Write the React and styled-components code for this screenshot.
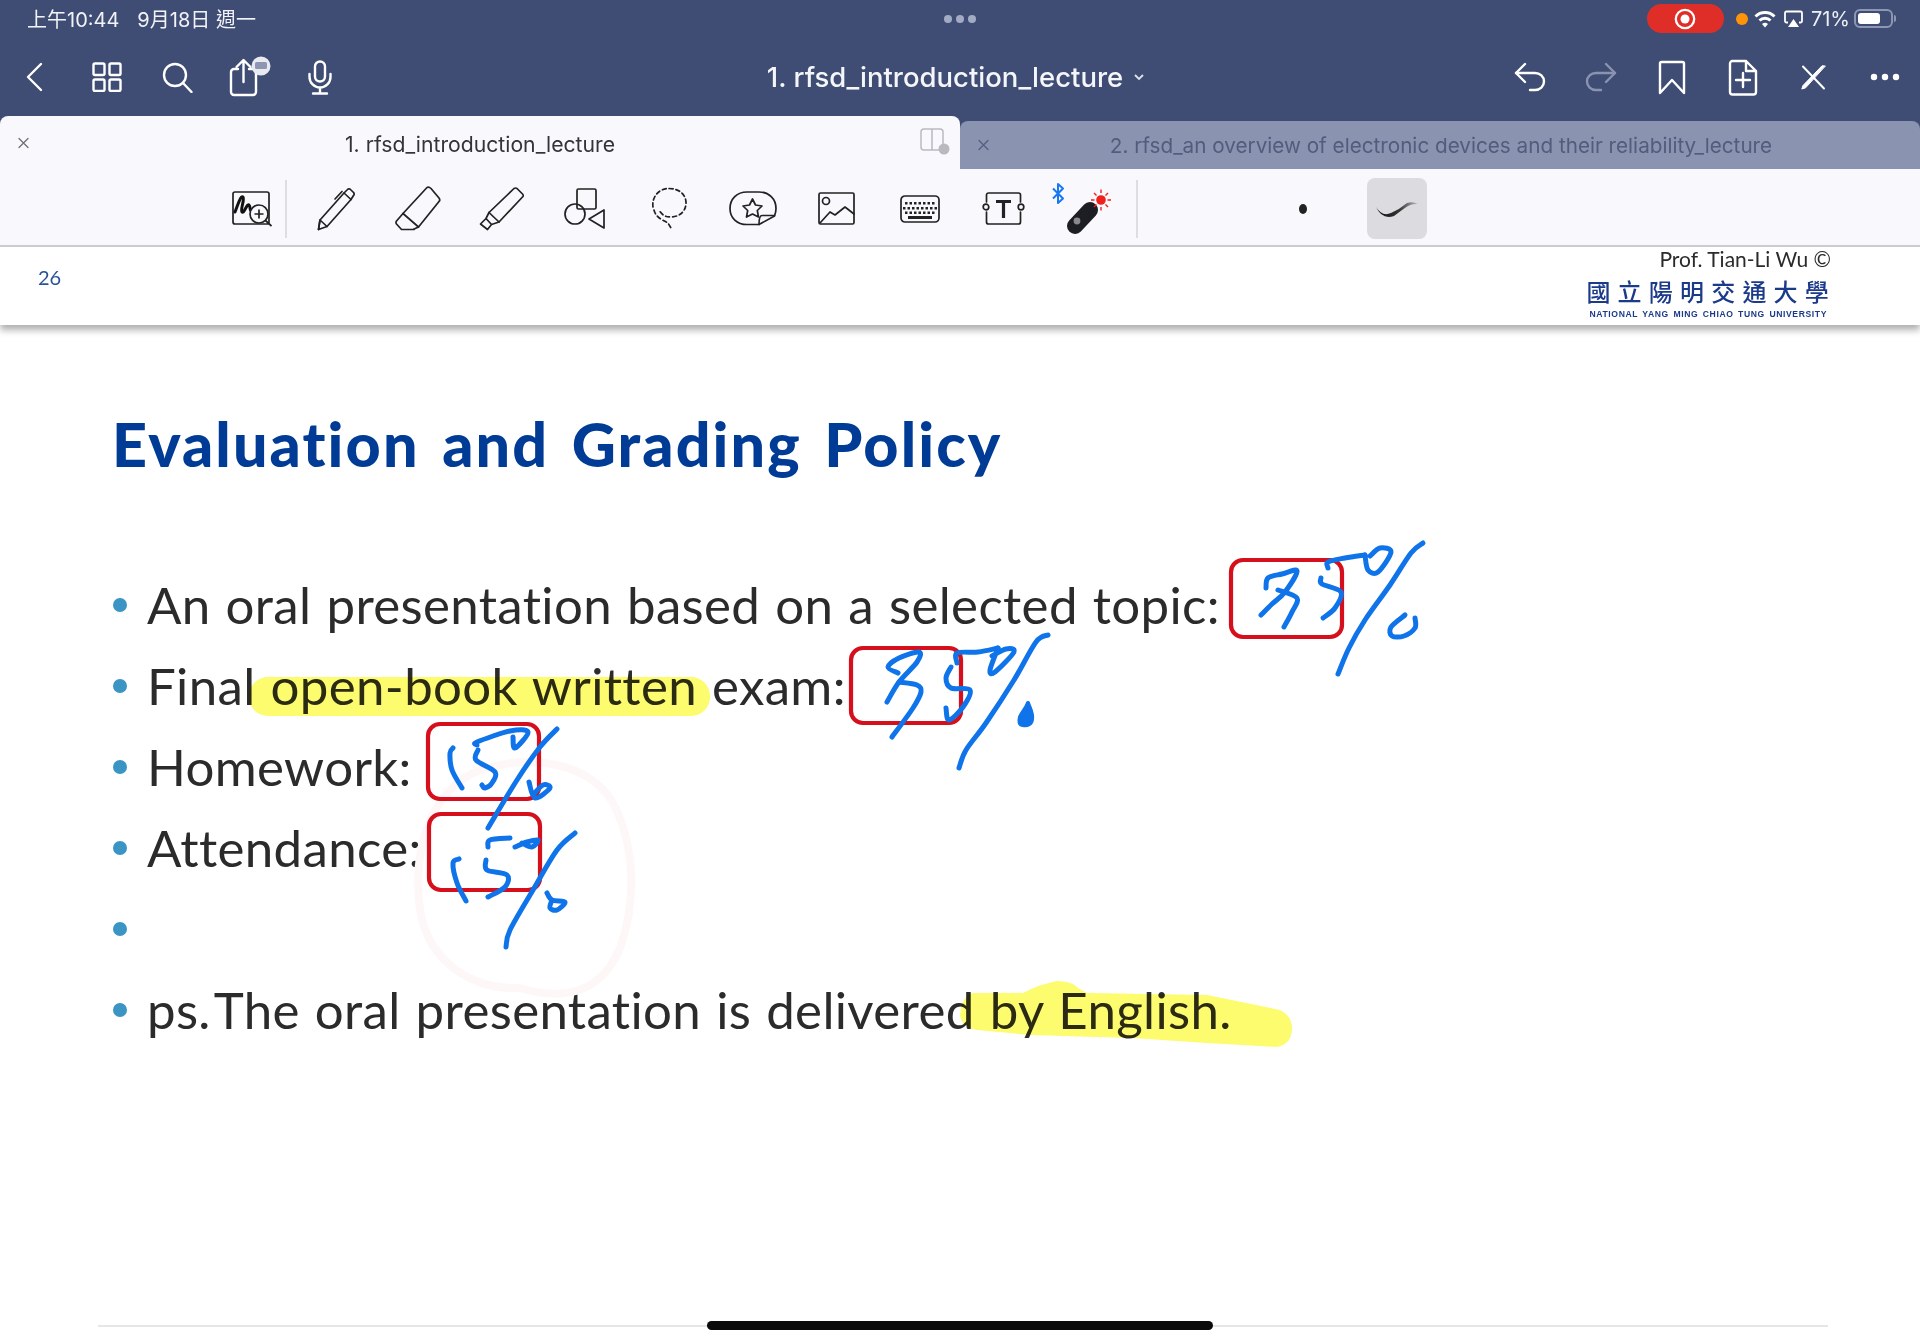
import styled, { createGlobalStyle } from "styled-components"

const GlobalStyle = createGlobalStyle`
    html, body {
        margin: 0;
        padding: 0;
        background: #fff;
    }
    * {
        box-sizing: border-box;
    }
`

const Page = styled.div`
    position: relative;
    width: 1920px;
    height: 1342px;
    overflow: hidden;
    display: flex;
    flex-direction: column;
    background: #fff;
    font-family: Inter, "Noto Sans CJK TC", sans-serif;
`

const Chrome = styled.div`
    background: #3f4d75;
    color: #fff;
`

const StatusBar = styled.div`
    height: 40px;
    padding: 0 27px 3px 27px;
    display: grid;
    grid-template-columns: 1fr auto 1fr;
    align-items: center;
`

const Clock = styled.div`
    display: flex;
    gap: 18px;
    font-size: 20px;
    font-family: Inter, "Noto Sans CJK TC", sans-serif;
    color: #f2f3f7;
`

const Dots = styled.div`
    display: flex;
    gap: 4px;
`

const Dot = styled.span`
    width: 8px;
    height: 8px;
    border-radius: 50%;
    background: ${({color}) => color || "#a3abc4"};
`

const StatusRight = styled.div`
    display: flex;
    justify-content: flex-end;
    align-items: center;
    font-size: 20px;
    color: #eef0f5;
`

const RecordPill = styled.div`
    width: 77px;
    height: 29px;
    border-radius: 15px;
    background: #df2e28;
    display: flex;
    align-items: center;
    justify-content: center;
    margin-right: 12px;
`

const OrangeDot = styled.span`
    width: 12px;
    height: 12px;
    border-radius: 50%;
    background: #ff9408;
    margin-right: 6px;
`

const Percent = styled.span`
    margin: 0 4px 0 8px;
`

const Battery = styled.div`
    width: 39px;
    height: 19px;
    border: 2px solid #8d96b3;
    border-radius: 6px;
    padding: 2px;
    position: relative;

    &::after {
        content: "";
        position: absolute;
        right: -5px;
        top: 4px;
        width: 2px;
        height: 7px;
        border-radius: 0 2px 2px 0;
        background: #8d96b3;
    }
`

const BatteryFill = styled.div`
    width: 71%;
    height: 100%;
    background: #fff;
    border-radius: 3px;
`

const NavBar = styled.div`
    height: 76px;
    padding-bottom: 2px;
    display: grid;
    grid-template-columns: 1fr auto 1fr;
    align-items: center;
`

const NavGroup = styled.div`
    display: flex;
    justify-content: ${({end}) => (end ? "flex-end" : "flex-start")};
`

const NavSlot = styled.div`
    width: 71px;
    height: 44px;
    display: flex;
    align-items: center;
    justify-content: center;
`

const DocTitle = styled.div`
    display: flex;
    align-items: center;
    gap: 10px;
    font-size: 27.5px;
    font-weight: 500;
    color: #f5f6fa;
    margin-right: 8px;
`

const TabBar = styled.div`
    height: 53px;
    display: grid;
    grid-template-columns: 960px 960px;
    background: #3f4d75;
`

const Tab = styled.div`
    position: relative;
    display: flex;
    align-items: center;
    justify-content: center;
    margin-top: ${({active}) => (active ? "0" : "5px")};
    padding-left: ${({active}) => (active ? "0" : "2px")};
    padding-top: ${({active}) => (active ? "2px" : "0")};
    background: ${({active}) => (active ? "#f9f8fc" : "#8a93b0")};
    color: ${({active}) => (active ? "#33343a" : "#525c7c")};
    border-radius: 8px 8px 0 0;
    font-size: ${({active}) => (active ? "21.2px" : "20.7px")};
`

const TabClose = styled.span`
    position: absolute;
    left: 17px;
    top: 50%;
    transform: translateY(-50%);
    display: flex;
`

const TabAction = styled.span`
    position: absolute;
    right: 10px;
    top: 12px;
    display: flex;
`

const ToolBar = styled.div`
    height: 78px;
    padding: 3px 0 0 218px;
    display: flex;
    align-items: center;
    background: #f9f8fc;
    border-bottom: 2px solid #cfced3;
`

const Tool = styled.div`
    width: ${({width}) => width || 83.6}px;
    height: 60px;
    flex: none;
    display: flex;
    align-items: center;
    justify-content: center;
`

const ToolDivider = styled.div`
    width: 2px;
    height: 58px;
    flex: none;
    background: #dedde2;
    margin: 0 ${({after}) => after || 0}px 0 ${({before}) => before || 0}px;
`

const PenDot = styled.span`
    width: 8px;
    height: 10px;
    margin: 0 60px 0 161px;
    border-radius: 50%;
    background: #222;
`

const BrushButton = styled.div`
    width: 60px;
    height: 61px;
    border-radius: 8px;
    background: #dcdbdf;
    display: flex;
    align-items: center;
    justify-content: center;
`

const SlideHeader = styled.div`
    height: 78px;
    padding: 0 89px 0 38px;
    display: flex;
    justify-content: space-between;
    background: #fff;
    box-shadow: 0 5px 7px rgba(0, 0, 0, 0.32);
    position: relative;
`

const PageNumber = styled.div`
    font-family: Lato, sans-serif;
    font-size: 20px;
    color: #2a5296;
    margin-top: 18px;
`

const Credit = styled.div`
    display: flex;
    flex-direction: column;
    align-items: flex-end;
`

const Prof = styled.div`
    font-family: Lato, sans-serif;
    font-size: 21px;
    line-height: 26px;
    color: #2b2b2b;
    margin-top: -1px;
`

const SchoolName = styled.div`
    font-family: "Noto Sans CJK TC", sans-serif;
    font-weight: 500;
    font-size: 24px;
    line-height: 30px;
    letter-spacing: 7.2px;
    margin: 4px -5px 0 0;
    color: #1c3a8a;
`

const SchoolEnglish = styled.div`
    font-family: "Liberation Sans", sans-serif;
    font-weight: 700;
    font-size: 8.6px;
    line-height: 12px;
    letter-spacing: 0.6px;
    word-spacing: 1.6px;
    margin: 2px 4px 0 0;
    color: #1c3a8a;
`

const Slide = styled.div`
    flex: 1;
    padding: 79px 92px 15px 113px;
    display: flex;
    flex-direction: column;
`

const SlideTitle = styled.h1`
    margin: 0 0 0 -1px;
    font-family: Lato, sans-serif;
    font-weight: 900;
    font-size: 61px;
    line-height: 80px;
    letter-spacing: 2.1px;
    word-spacing: 6px;
    font-variant-ligatures: none;
    color: #003c96;
`

const Bullets = styled.ul`
    list-style: none;
    margin: 80px 0 0;
    padding: 0;
`

const Bullet = styled.li`
    height: 81px;
    display: flex;
    align-items: center;
    gap: 20px;
    font-family: Lato, sans-serif;
    font-size: 51px;
    letter-spacing: 0.35px;
    word-spacing: 1.6px;
    font-variant-ligatures: none;
    color: #2b2b2b;
    white-space: pre;
`

const BulletMark = styled.span`
    width: 14px;
    height: 14px;
    flex: none;
    border-radius: 50%;
    background: #3a94c4;
`

const TightWord = styled.span`
    word-spacing: -9px;
`

const FootRule = styled.div`
    margin: auto 0 0 -15px;
    height: 2px;
    background: #e6e6e8;
`

const HomeBar = styled.div`
    position: absolute;
    left: 707px;
    top: 1321px;
    width: 506px;
    height: 9px;
    border-radius: 5px;
    background: #0b0b0b;
`

const InkLayer = styled.svg`
    position: absolute;
    inset: 0;
    pointer-events: none;
    mix-blend-mode: ${({blend}) => blend || "normal"};
`

const line = { fill: "none", stroke: "currentColor", strokeWidth: 2, strokeLinecap: "round", strokeLinejoin: "round" }

const Icon = ({ w, h, color = "#fff", sw = 2.4, shift = 0, children }) => (
    <svg width={w} height={h} viewBox={`0 0 ${w} ${h}`} style={{ color, display: "block", flex: "none", marginLeft: shift }}>
        <g {...line} strokeWidth={sw}>{children}</g>
    </svg>
)

// nav icons
const BackIcon = () => <Icon w={19} h={30} shift={-3}><path d="M16 2 3 15l13 13" /></Icon>
const GridIcon = () => (
    <Icon w={30} h={30}>
        <rect x="1.5" y="1.5" width="11" height="11.5" rx="1.5" />
        <rect x="17.5" y="1.5" width="11" height="11.5" rx="1.5" />
        <rect x="1.5" y="17.5" width="11" height="11.5" rx="1.5" />
        <rect x="17.5" y="17.5" width="11" height="11.5" rx="1.5" />
    </Icon>
)
const SearchIcon = () => <Icon w={31} h={31}><circle cx="13" cy="13" r="11" /><path d="m21 21 8.5 9" /></Icon>
const ShareIcon = () => (
    <svg width="44" height="42" viewBox="0 0 44 42" style={{ display: "block", color: "#fff", marginLeft: 2 }}>
        <g {...line} strokeWidth="2.4">
            <path d="M10 13H6a3 3 0 0 0-3 3v20a3 3 0 0 0 3 3h19a3 3 0 0 0 3-3V16a3 3 0 0 0-3-3h-4" />
            <path d="M15.500 26V5M8.500 11l7-7 7 7" />
        </g>
        <circle cx="33" cy="10" r="9.500" fill="#e8eaf0" />
        <rect x="27" y="6" width="12" height="7" rx="1.500" fill="#8d96b3" />
    </svg>
)
const MicIcon = () => (
    <Icon w={26} h={35}>
        <rect x="8" y="1.500" width="10" height="20" rx="5" />
        <path d="M2.500 14v3a10.500 10.500 0 0 0 21 0v-3M13 27.500v5M6 33.500h14" />
    </Icon>
)
const UndoIcon = ({ color, flip }) => (
    <svg width="32" height="30" viewBox="0 0 32 30" style={{ color: color || "#fff", display: "block", transform: flip ? "scaleX(-1)" : "none" }}>
        <g {...line} strokeWidth="2.400">
            <path d="M11 2 2 11l9 9" />
            <path d="M2 11h19c5 0 9 3.500 9 8.500S26 28 21 28h-5" />
        </g>
    </svg>
)
const BookmarkIcon = () => <Icon w={28} h={35}><path d="M2 3.500Q2 2 3.500 2h21Q26 2 26 3.500V33L14 20 2 33Z" /></Icon>
const AddPageIcon = () => (
    <Icon w={30} h={37}>
        <path d="M4 2h14l10 10v21a2.500 2.500 0 0 1-2.500 2.500h-21A2.500 2.500 0 0 1 2 33V4.500A2.500 2.500 0 0 1 4.500 2ZM18 2v10h10" />
        <path d="M15 14v14M8 21h14" />
    </Icon>
)
const CrossToolsIcon = () => (
    <Icon w={27} h={25} sw={2}>
        <path d="M3 1.500 24 23.500" />
        <path d="M25 1 22 .8 3 20.500 1.800 24 5.200 23Z" fill="#fff" strokeWidth="1" />
    </Icon>
)
const MoreIcon = () => (
    <svg width="30" height="8" viewBox="0 0 30 8" style={{ display: "block" }}>
        <circle cx="4" cy="4" r="3.200" fill="#fff" />
        <circle cx="15" cy="4" r="3.200" fill="#fff" />
        <circle cx="26" cy="4" r="3.200" fill="#fff" />
    </svg>
)

// status icons
const RecordIcon = () => (
    <svg width="22" height="22" viewBox="0 0 22 22" style={{ display: "block" }}>
        <circle cx="11" cy="11" r="9.200" fill="none" stroke="#fff" strokeWidth="2.300" />
        <circle cx="11" cy="11" r="4.500" fill="#fff" />
    </svg>
)
const WifiIcon = () => (
    <svg width="22" height="18" viewBox="0 0 22 18" style={{ display: "block", marginRight: 8 }}>
        <g fill="none" stroke="#fff" strokeWidth="3">
            <path d="M1.500 6.500a13.500 13.500 0 0 1 19 0" />
            <path d="M5.500 10.500a8 8 0 0 1 11 0" />
        </g>
        <path d="m11 17.500-3-3.500a4.500 4.500 0 0 1 6 0Z" fill="#fff" />
    </svg>
)
const AirplayIcon = () => (
    <svg width="19" height="18" viewBox="0 0 19 18" style={{ display: "block" }}>
        <path d="M4 12.500H2.500a1.500 1.500 0 0 1-1.500-1.500V3a1.500 1.500 0 0 1 1.500-1.500h14A1.500 1.500 0 0 1 18 3v8a1.500 1.500 0 0 1-1.500 1.500H15" fill="none" stroke="#fff" strokeWidth="1.800" />
        <path d="m9.500 9 5.500 8H4Z" fill="#fff" />
    </svg>
)

// toolbar icons
const ZoomWindowIcon = () => (
    <svg width="40" height="36" viewBox="0 0 40 36" style={{ display: "block" }}>
        <rect x="1" y="1" width="36" height="32" rx="2" fill="none" stroke="#222" strokeWidth="1.700" />
        <path d="M3 21c3-8 6-17 8-15s-3 13-1 15 5-9 7-7 0 6 3 6" fill="none" stroke="#111" strokeWidth="3" strokeLinecap="round" />
        <circle cx="27" cy="23" r="9" fill="#f9f8fc" stroke="#222" strokeWidth="1.700" />
        <path d="M27 18.500v9M22.500 23h9M33.500 29.500l6 5.500" fill="none" stroke="#222" strokeWidth="1.700" />
    </svg>
)
const PenIcon = () => (
    <Icon w={42} h={44} color="#222" sw={1.700}>
        <path d="M6 33 30 6l7 6.500L13 39.500l-8.500 3Z" />
        <path d="M30 6l3.500-3.500a2 2 0 0 1 3 0l3 3a2 2 0 0 1 0 3L37 12.500M21 12l7-7.500M4.500 42.500l1.500-9.500 7 6.500" />
    </Icon>
)
const EraserIcon = () => (
    <Icon w={46} h={45} color="#222" sw={1.700}>
        <path d="M32 1.500Q34 0.500 36 2.500l8 9.500q1.500 2 0 3.500L23.500 41 8 27.500Z" />
        <path d="M8 27.500 1.500 35q-1 1.500 0 3l5 5.500h11.500L23.500 41M13 43.500h6" />
    </Icon>
)
const MarkerIcon = () => (
    <Icon w={45} h={44} color="#222" sw={1.700}>
        <path d="M35 1.500q1.500-1 3 0l5.500 5.500q1.500 1.500 0 3L20 35l-10-9.500Z" />
        <path d="m10 25.500-3 6 5.500 6 7.500-2.500M7 31.500l-5.500 5.500 7 5.500 4-5" />
    </Icon>
)
const ShapesIcon = () => (
    <Icon w={43} h={41} color="#222" sw={1.700}>
        <rect x="13" y="1" width="19" height="20" rx="1.500" />
        <circle cx="11" cy="26" r="10" />
        <path d="M40 22v18l-15-9Z" />
    </Icon>
)
const LassoIcon = () => (
    <Icon w={38} h={43} color="#222" sw={1.700}>
        <path strokeDasharray="4 3" d="M19 1.500c10 0 17 6 17 14.500s-7 14-15 14-10-4-12-7M3 20C1.500 11 8 1.500 19 1.500M4 23c2 8 9 10 14 13l3 5" />
    </Icon>
)
const StickerIcon = () => (
    <Icon w={48} h={35} color="#222" sw={1.700}>
        <path d="M30 33.500H18C8 33.500 1 27 1 17.500S8 1 18 1h12c10 0 17 7 17 16.500 0 3-.5 5-1.500 7.500Z" />
        <path d="M30 33.500c0-4 0-9 3-9h12.500" />
        <path d="m23.500 8 3 6 6.500 1-4.700 4.500 1.200 6.500-6-3-6 3 1.200-6.500L14 15l6.500-1Z" />
    </Icon>
)
const ImageIcon = () => (
    <Icon w={37} h={33} color="#222" sw={1.700}>
        <rect x="1" y="1" width="35" height="31" rx="1.500" />
        <circle cx="8" cy="9" r="3.500" />
        <path d="M2 31 12 20l5 3 10-8 9 7" />
    </Icon>
)
const KeyboardIcon = () => {
    const keys = []
    for (let c = 0; c < 7; c++) keys.push(<rect key={"a" + c} x={5 + c * 4.500} y="7" width="2.500" height="2.500" />)
    for (let c = 0; c < 8; c++) keys.push(<rect key={"b" + c} x={3 + c * 4.500} y="12" width="2.500" height="2.500" />)
    for (let c = 0; c < 7; c++) keys.push(<rect key={"c" + c} x={5 + c * 4.500} y="16.500" width="2.500" height="2.500" />)
    return (
        <svg width="40" height="28" viewBox="0 0 40 28" style={{ display: "block" }}>
            <rect x="1" y="1" width="38" height="26" rx="4" fill="none" stroke="#222" strokeWidth="1.700" />
            <g fill="#222">{keys}<rect x="8" y="21" width="24" height="3" /></g>
        </svg>
    )
}
const TextBoxIcon = () => (
    <Icon w={43} h={33} color="#222" sw={1.700}>
        <path d="M4.500 10V3a2 2 0 0 1 2-2h30a2 2 0 0 1 2 2v7M4.500 20v10a2 2 0 0 0 2 2h30a2 2 0 0 0 2-2V20" />
        <circle cx="4" cy="15" r="2.800" />
        <circle cx="39" cy="15" r="2.800" />
        <path d="M14 9.500h15M21.500 9.500V26" strokeWidth="3.200" strokeLinecap="butt" />
    </Icon>
)
const LaserIcon = () => (
    <svg width="60" height="52" viewBox="0 0 60 52" style={{ display: "block" }}>
        <path d="m1 5.500 10 10L6 20V1l5 4.500L1 15.500" fill="none" stroke="#1877f2" strokeWidth="2" strokeLinejoin="round" />
        <path d="M23 43 38 27" stroke="#1d1d24" strokeWidth="16" strokeLinecap="round" />
        <circle cx="25" cy="38" r="3.400" fill="#8a8a8e" />
        <circle cx="49" cy="17" r="4.800" fill="#f0201c" />
        <g stroke="#f0201c" strokeWidth="1.400">
            <path d="M49 6.500V10M49 24v3.500M39 17h3.500M55.500 17H59M42 10l2.500 2.500M53.500 21.500 56 24M42 24l2.500-2.500M53.500 12.500 56 10" />
        </g>
    </svg>
)
const BrushIcon = () => (
    <svg width="44" height="22" viewBox="0 0 44 22">
        <defs>
            <linearGradient id="brushFade" x1="0" x2="1" y1="0" y2="0">
                <stop offset="0" stopColor="#111" />
                <stop offset="0.55" stopColor="#333" />
                <stop offset="1" stopColor="#bdbcc1" />
            </linearGradient>
        </defs>
        <path d="M1 9q6 10 15 6T32 5q6-2 11 1-6-.5-10 2T19 18Q7 22 1 9Z" fill="url(#brushFade)" />
    </svg>
)
const CloseIcon = ({ color = "#70717a" }) => <Icon w={13} h={13} color={color} sw={1.300}><path d="m2 2 9 9M11 2l-9 9" /></Icon>
const SplitIcon = () => (
    <svg width="30" height="27" viewBox="0 0 30 27" style={{ display: "block" }}>
        <rect x="1" y="1" width="22" height="21" rx="3" fill="none" stroke="#b9b9c0" strokeWidth="1.500" />
        <path d="M12 1v21" stroke="#b9b9c0" strokeWidth="1.500" />
        <circle cx="24" cy="21" r="5.500" fill="#b9b9c0" />
    </svg>
)

// smooth hand drawn strokes through points
const smooth = (pts) => {
    let d = `M${pts[0][0]} ${pts[0][1]}`
    for (let i = 0; i < pts.length - 1; i++) {
        const p0 = pts[i - 1] || pts[i]
        const p1 = pts[i]
        const p2 = pts[i + 1]
        const p3 = pts[i + 2] || p2
        d += ` C${p1[0] + (p2[0] - p0[0]) / 6} ${p1[1] + (p2[1] - p0[1]) / 6} ${p2[0] - (p3[0] - p1[0]) / 6} ${p2[1] - (p3[1] - p1[1]) / 6} ${p2[0]} ${p2[1]}`
    }
    return d
}

const redBoxes = [
    { x: 1231, y: 560, w: 111, h: 77 },
    { x: 851, y: 648, w: 110, h: 75 },
    { x: 428, y: 724, w: 111, h: 75 },
    { x: 429, y: 814, w: 111, h: 76 },
]

const blueStrokes = [
    // 35% first row
    [[1266, 588], [1268, 578], [1282, 574], [1297, 571], [1285, 592], [1272, 604], [1261, 615]],
    [[1278, 590], [1297, 598], [1292, 612], [1284, 627]],
    [[1328, 568], [1328, 562], [1345, 558], [1365, 555]],
    [[1321, 578], [1322, 584], [1341, 592], [1335, 608], [1323, 618]],
    [[1365, 555], [1368, 570], [1378, 572], [1391, 552], [1380, 548], [1370, 556]],
    [[1423, 543], [1411, 553], [1390, 585], [1365, 620], [1349, 648], [1338, 674]],
    [[1405, 615], [1391, 627], [1392, 636], [1404, 636], [1415, 628], [1415, 618]],
    // 35% second row
    [[898, 673], [888, 667], [899, 658], [919, 652], [917, 662], [899, 682], [887, 702]],
    [[899, 682], [917, 685], [921, 692], [913, 708], [892, 737]],
    [[957, 663], [957, 653], [978, 652], [998, 648]],
    [[951, 667], [946, 678], [951, 688], [970, 690], [963, 707], [949, 720], [946, 708]],
    [[998, 648], [990, 670], [995, 672], [1014, 652], [1006, 649], [992, 656]],
    [[1048, 635], [1036, 642], [1014, 680], [986, 723], [966, 750], [959, 768]],
    // 15% third row
    [[453, 748], [450, 753], [452, 770], [462, 788]],
    [[477, 745], [477, 742], [510, 731], [528, 732], [515, 748], [513, 737]],
    [[478, 750], [476, 760], [495, 772], [492, 783], [485, 788], [482, 785]],
    [[557, 729], [540, 747], [517, 780], [488, 828]],
    [[529, 782], [535, 798], [550, 788], [543, 785], [533, 795]],
    // 15% fourth row
    [[488, 847], [490, 840], [510, 838]],
    [[515, 847], [527, 842], [538, 840], [532, 847], [522, 843]],
    [[459, 859], [453, 863], [457, 883], [466, 901]],
    [[486, 860], [487, 870], [507, 875], [505, 887], [488, 897]],
    [[575, 833], [557, 850], [533, 890], [510, 930], [506, 947]],
    [[547, 893], [552, 900], [565, 902], [557, 910], [550, 908], [552, 900]],
]

const Ink = () => (
    <InkLayer width="1920" height="1342" viewBox="0 0 1920 1342">
        <path d="M480 770C430 790 412 850 420 910c8 50 50 80 100 78 40 12 80 8 100-40 18-50 14-110-10-150-26-36-80-44-130-28Z" fill="none" stroke="#fef7f8" strokeWidth="8" />
        {redBoxes.map((b, i) => (
            <rect key={i} x={b.x} y={b.y} width={b.w} height={b.h} rx="12" fill="none" stroke="#d60f1c" strokeWidth="4.200" />
        ))}
        {blueStrokes.map((s, i) => (
            <path key={i} d={smooth(s)} fill="none" stroke="#0f73ea" strokeWidth="5" strokeLinecap="round" strokeLinejoin="round" />
        ))}
        <path d="M1028 703c2 6 5 10 4 16 0 5-5 7-9 6-4 0-4-4-3-8 2-5 6-8 8-14Z" fill="#0f73ea" stroke="#0f73ea" strokeWidth="4" strokeLinejoin="round" />
    </InkLayer>
)

const Highlights = () => (
    <InkLayer blend="multiply" width="1920" height="1342" viewBox="0 0 1920 1342">
        <rect x="249" y="677" width="461" height="39" rx="19" fill="#fdfb6e" />
        <path d="M960 1015Q962 996 973 993L1023 993Q1040 984 1057 981 1072 981 1078 988L1087 993 1207 995 1280 1010Q1292 1016 1292 1028 1292 1044 1277 1047L1207 1043 1133 1038 1030 1035 977 1030Q962 1028 960 1015Z" fill="#fdfb6e" />
    </InkLayer>
)

const rows = [
    "An oral presentation based on a selected topic:",
    "Final open-book written exam:",
    "Homework:",
    "Attendance:",
    "",
    <span key="ps"><TightWord>ps. The</TightWord> oral presentation is delivered by English.</span>,
]

export default function App() {
    return (
        <Page>
            <GlobalStyle />
            <Chrome>
                <StatusBar>
                    <Clock><span>上午10:44</span><span>9月18日 週一</span></Clock>
                    <Dots><Dot /><Dot /><Dot /></Dots>
                    <StatusRight>
                        <RecordPill><RecordIcon /></RecordPill>
                        <OrangeDot />
                        <WifiIcon />
                        <AirplayIcon />
                        <Percent>71%</Percent>
                        <Battery><BatteryFill /></Battery>
                    </StatusRight>
                </StatusBar>
                <NavBar>
                    <NavGroup>
                        <NavSlot><BackIcon /></NavSlot>
                        <NavSlot><GridIcon /></NavSlot>
                        <NavSlot><SearchIcon /></NavSlot>
                        <NavSlot><ShareIcon /></NavSlot>
                        <NavSlot><MicIcon /></NavSlot>
                    </NavGroup>
                    <DocTitle>
                        1. rfsd_introduction_lecture
                        <svg width="12" height="8" viewBox="0 0 12 8"><path d="m2 2 4 4 4-4" fill="none" stroke="#dfe2ea" strokeWidth="1.800" /></svg>
                    </DocTitle>
                    <NavGroup end>
                        <NavSlot><UndoIcon /></NavSlot>
                        <NavSlot><UndoIcon flip color="#8a93b0" /></NavSlot>
                        <NavSlot><BookmarkIcon /></NavSlot>
                        <NavSlot><AddPageIcon /></NavSlot>
                        <NavSlot><CrossToolsIcon /></NavSlot>
                        <NavSlot><MoreIcon /></NavSlot>
                    </NavGroup>
                </NavBar>
            </Chrome>
            <TabBar>
                <Tab active>
                    <TabClose><CloseIcon /></TabClose>
                    1. rfsd_introduction_lecture
                    <TabAction><SplitIcon /></TabAction>
                </Tab>
                <Tab>
                    <TabClose><CloseIcon color="#565f80" /></TabClose>
                    2. rfsd_an overview of electronic devices and their reliability_lecture
                </Tab>
            </TabBar>
            <ToolBar>
                <Tool width={67}><ZoomWindowIcon /></Tool>
                <ToolDivider after={6} />
                <Tool><PenIcon /></Tool>
                <Tool><EraserIcon /></Tool>
                <Tool><MarkerIcon /></Tool>
                <Tool><ShapesIcon /></Tool>
                <Tool><LassoIcon /></Tool>
                <Tool><StickerIcon /></Tool>
                <Tool><ImageIcon /></Tool>
                <Tool><KeyboardIcon /></Tool>
                <Tool><TextBoxIcon /></Tool>
                <Tool width={74}><LaserIcon /></Tool>
                <ToolDivider before={17} />
                <PenDot />
                <BrushButton><BrushIcon /></BrushButton>
            </ToolBar>
            <SlideHeader>
                <PageNumber>26</PageNumber>
                <Credit>
                    <Prof>Prof. Tian-Li Wu ©</Prof>
                    <SchoolName>國立陽明交通大學</SchoolName>
                    <SchoolEnglish>NATIONAL YANG MING CHIAO TUNG UNIVERSITY</SchoolEnglish>
                </Credit>
            </SlideHeader>
            <Slide>
                <SlideTitle>Evaluation and Grading Policy</SlideTitle>
                <Bullets>
                    {rows.map((r, i) => (
                        <Bullet key={i}><BulletMark />{r}</Bullet>
                    ))}
                </Bullets>
                <FootRule />
            </Slide>
            <Highlights />
            <Ink />
            <HomeBar />
        </Page>
    )
}
